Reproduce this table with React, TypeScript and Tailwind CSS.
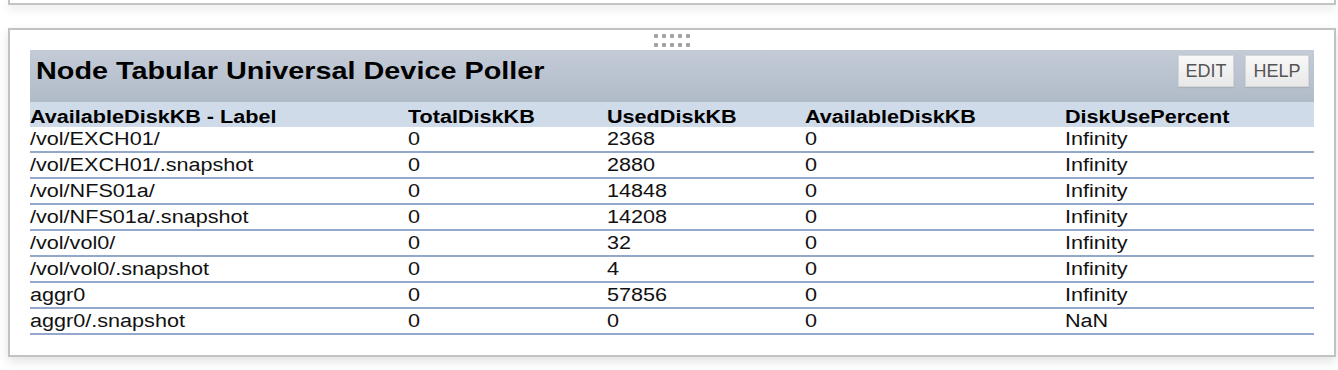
import React from 'react';

interface DiskRow {
  label: string;
  total: string;
  used: string;
  available: string;
  percent: string;
}

const rows: DiskRow[] = [
  { label: '/vol/EXCH01/', total: '0', used: '2368', available: '0', percent: 'Infinity' },
  { label: '/vol/EXCH01/.snapshot', total: '0', used: '2880', available: '0', percent: 'Infinity' },
  { label: '/vol/NFS01a/', total: '0', used: '14848', available: '0', percent: 'Infinity' },
  { label: '/vol/NFS01a/.snapshot', total: '0', used: '14208', available: '0', percent: 'Infinity' },
  { label: '/vol/vol0/', total: '0', used: '32', available: '0', percent: 'Infinity' },
  { label: '/vol/vol0/.snapshot', total: '0', used: '4', available: '0', percent: 'Infinity' },
  { label: 'aggr0', total: '0', used: '57856', available: '0', percent: 'Infinity' },
  { label: 'aggr0/.snapshot', total: '0', used: '0', available: '0', percent: 'NaN' },
];

const headers = ['AvailableDiskKB - Label', 'TotalDiskKB', 'UsedDiskKB', 'AvailableDiskKB', 'DiskUsePercent'];

const cols = 'grid grid-cols-[378px_199px_198px_260px_1fr]';

// the table text is drawn a bit wide in the original
function Wide({ children }: { children: React.ReactNode }) {
  return <span className="inline-block origin-left scale-x-[1.2] whitespace-nowrap">{children}</span>;
}

function DragHandle() {
  return (
    <div className="flex justify-center pt-[4px] h-[20px]">
      <div className="grid grid-cols-5 gap-x-[4px] gap-y-[2px]">
        {Array.from({ length: 10 }).map((_, i) => (
          <div key={i} className="w-[4px] h-[4px] bg-[#a3a3a3] rounded-[1px]" />
        ))}
      </div>
    </div>
  );
}

export default function App() {
  return (
    <div className="min-h-screen bg-white font-['Liberation_Sans',Arial,sans-serif] text-black">
      {/* previous resource, only its bottom edge shows */}
      <div className="ml-[8px] mr-[2px] h-[5px] border-2 border-t-0 border-[#c4c4c4] bg-white shadow-[0_4px_10px_rgba(0,0,0,0.12)]" />

      <div className="ml-[8px] mr-[2px] mt-[23px] border-2 border-[#c2c2c2] bg-white shadow-[0_4px_10px_rgba(0,0,0,0.12)] px-[20px] pb-[20px]">
        <DragHandle />

        <div className="flex items-center justify-between h-[52px] pb-[10px] pl-[6px] pr-[5px] bg-gradient-to-b from-[#c3cbd7] to-[#b1bbc8]">
          <h1 className="text-[24px] font-bold leading-[32px]">
            <Wide>Node Tabular Universal Device Poller</Wide>
          </h1>
          <div className="flex items-center gap-[11px]">
            <button className="w-[56px] h-[32px] text-[18px] text-[#555] bg-gradient-to-b from-[#f8f8f8] to-[#e8e8e8] border border-[#d6d6d6] shadow-[0_1px_1px_rgba(0,0,0,0.08)]">
              EDIT
            </button>
            <button className="w-[64px] h-[32px] text-[18px] text-[#555] bg-gradient-to-b from-[#f8f8f8] to-[#e8e8e8] border border-[#d6d6d6] shadow-[0_1px_1px_rgba(0,0,0,0.08)]">
              HELP
            </button>
          </div>
        </div>

        <div className={`${cols} h-[25px] pt-[6px] bg-[#d0dbe9] text-[18px] font-bold leading-[19px]`}>
          {headers.map(h => (
            <div key={h}>
              <Wide>{h}</Wide>
            </div>
          ))}
        </div>

        {rows.map(row => (
          <div
            key={row.label}
            className={`${cols} h-[26px] border-b-2 border-[#93a8cc] text-[18px] leading-[24px] text-[#111]`}
          >
            <div><Wide>{row.label}</Wide></div>
            <div><Wide>{row.total}</Wide></div>
            <div><Wide>{row.used}</Wide></div>
            <div><Wide>{row.available}</Wide></div>
            <div><Wide>{row.percent}</Wide></div>
          </div>
        ))}
      </div>
    </div>
  );
}
